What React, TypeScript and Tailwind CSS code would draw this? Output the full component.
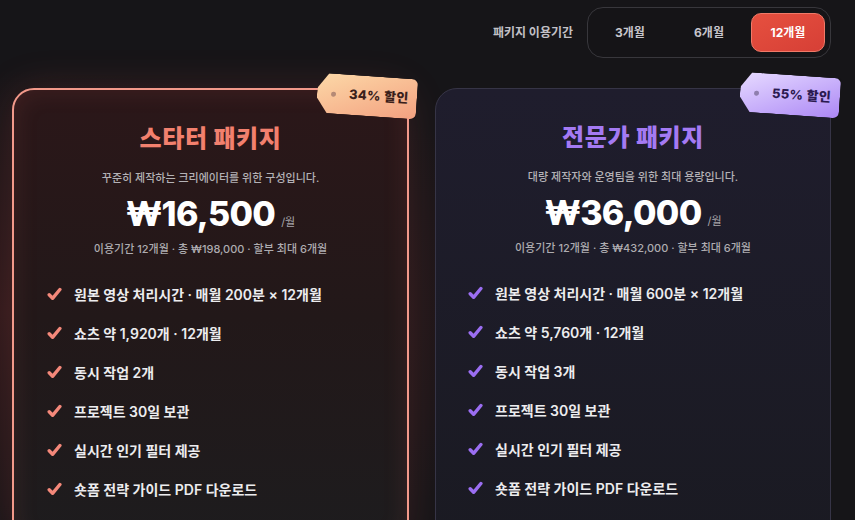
import React from "react";

type Plan = {
  name: string;
  desc: string;
  price: string;
  period: string;
  discount: string;
  features: string[];
  variant: "starter" | "pro";
};

const plans: Plan[] = [
  {
    name: "스타터 패키지",
    desc: "꾸준히 제작하는 크리에이터를 위한 구성입니다.",
    price: "₩16,500",
    period: "이용기간 12개월 · 총 ₩198,000 · 할부 최대 6개월",
    discount: "34% 할인",
    variant: "starter",
    features: [
      "원본 영상 처리시간 · 매월 200분 × 12개월",
      "쇼츠 약 1,920개 · 12개월",
      "동시 작업 2개",
      "프로젝트 30일 보관",
      "실시간 인기 필터 제공",
      "숏폼 전략 가이드 PDF 다운로드",
    ],
  },
  {
    name: "전문가 패키지",
    desc: "대량 제작자와 운영팀을 위한 최대 용량입니다.",
    price: "₩36,000",
    period: "이용기간 12개월 · 총 ₩432,000 · 할부 최대 6개월",
    discount: "55% 할인",
    variant: "pro",
    features: [
      "원본 영상 처리시간 · 매월 600분 × 12개월",
      "쇼츠 약 5,760개 · 12개월",
      "동시 작업 3개",
      "프로젝트 30일 보관",
      "실시간 인기 필터 제공",
      "숏폼 전략 가이드 PDF 다운로드",
    ],
  },
];

function Check({ color }: { color: string }) {
  return (
    <svg width="15" height="14" viewBox="0 0 15 14" className="shrink-0">
      <path
        d="M2.2 7.8 L5.6 11.3 L12.9 2.5"
        fill="none"
        stroke={color}
        strokeWidth="3.4"
        strokeLinecap="round"
        strokeLinejoin="round"
      />
    </svg>
  );
}

function Tag({ label, variant }: { label: string; variant: Plan["variant"] }) {
  const starter = variant === "starter";
  return (
    <div
      className={
        "absolute -top-[14px] -right-[10px] rotate-[4deg] flex h-[40px] w-[100px] items-center rounded-r-[6px] pl-[14px] shadow-[0_4px_14px_rgba(0,0,0,0.35)] [clip-path:polygon(11px_0,100%_0,100%_100%,11px_100%,0_62%,0_38%)] " +
        (starter
          ? "bg-gradient-to-br from-[#fcd9a8] to-[#f2a080]"
          : "bg-gradient-to-br from-[#e8dbff] to-[#ac86f4]")
      }
    >
      <span
        className={
          "h-[5px] w-[5px] rounded-full " + (starter ? "bg-[#b58a76]" : "bg-[#8f7fae]")
        }
      />
      <span
        className={
          "ml-[13px] text-[13px] font-extrabold tracking-wide " +
          (starter ? "text-[#3a1f1b]" : "text-[#2b1a50]")
        }
      >
        {label}
      </span>
    </div>
  );
}

function PlanCard({ plan }: { plan: Plan }) {
  const starter = plan.variant === "starter";
  return (
    <div
      className={
        "relative h-[460px] rounded-[22px] " +
        (starter
          ? "border-2 border-[#f2998a] bg-gradient-to-b from-[#2b1719] via-[#221819] to-[#1d1c1e] shadow-[0_0_40px_rgba(230,90,80,0.16),inset_0_0_26px_rgba(240,110,100,0.12)]"
          : "border border-[#363446] bg-gradient-to-b from-[#1f1d2d] to-[#1a1a22]")
      }
    >
      <Tag label={plan.discount} variant={plan.variant} />
      <div className="flex flex-col items-center pt-[33px]">
        <h2
          className={
            "text-[24px] leading-[32px] font-extrabold tracking-wide " +
            (starter ? "text-[#f2806e]" : "text-[#a47af3]")
          }
        >
          {plan.name}
        </h2>
        <p className="mt-[15px] text-[11px] leading-[16px] font-medium text-[#b4b2b6]">{plan.desc}</p>
        <div className="mt-[9px] flex items-end gap-[6px]">
          <span className="text-[34px] leading-[38px] font-extrabold tracking-[-0.02em] text-white">
            {plan.price}
          </span>
          <span className="pb-[3px] text-[11px] text-[#a8a6aa]">/월</span>
        </div>
        <p className="mt-[8px] text-[11px] leading-[16px] font-medium text-[#aeacb0]">{plan.period}</p>
      </div>
      <ul className={"mt-[26px] flex flex-col gap-[17px] " + (starter ? "pl-[33px]" : "pl-[32px]")}>
        {plan.features.map((f) => (
          <li key={f} className="flex h-[22px] items-center gap-[12px]">
            <Check color={starter ? "#f4887a" : "#9b6ef2"} />
            <span className="text-[14px] font-semibold text-[#ececee]">{f}</span>
          </li>
        ))}
      </ul>
    </div>
  );
}

export default function App() {
  const periods = ["3개월", "6개월", "12개월"];
  return (
    <div className="h-[520px] w-[855px] overflow-hidden bg-[#161518] bg-[radial-gradient(ellipse_at_0%_60%,rgba(120,40,40,0.25),transparent_55%)] pl-3 pr-6 pt-[7px] font-['Inter','Noto_Sans_CJK_KR',sans-serif]">
      <div className="flex items-center justify-end gap-[14px]">
        <span className="text-[12px] font-bold text-[#c2c0c6]">패키지 이용기간</span>
        <div className="flex gap-[5px] rounded-[16px] border border-[#38373c] bg-[#151417] p-[5px]">
          {periods.map((p) => {
            const active = p === "12개월";
            return (
              <button
                key={p}
                className={
                  "h-[39px] w-[74px] rounded-[10px] text-[12px] font-bold " +
                  (active
                    ? "border border-[#f07a68] bg-gradient-to-br from-[#e6503f] to-[#d63f36] text-white"
                    : "text-[#c8c6cc]")
                }
              >
                {p}
              </button>
            );
          })}
        </div>
      </div>
      <div className="mt-[30px] grid grid-cols-[397px_396px] gap-[26px]">
        {plans.map((p) => (
          <PlanCard key={p.name} plan={p} />
        ))}
      </div>
    </div>
  );
}
